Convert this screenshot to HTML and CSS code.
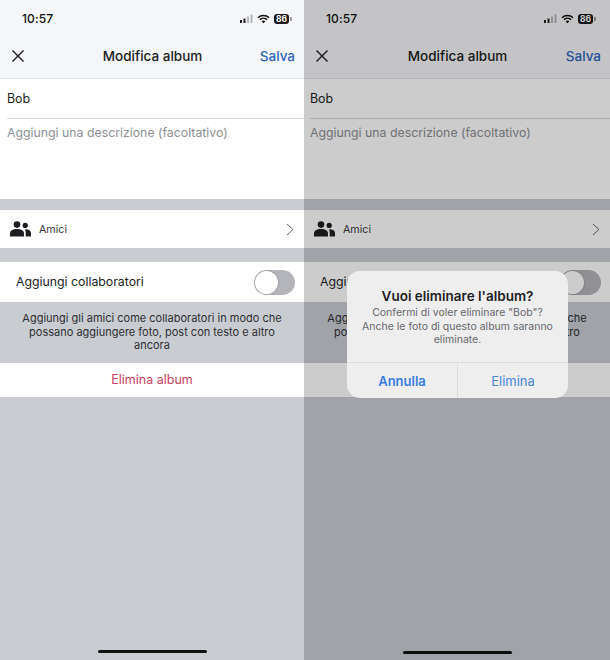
FILE: index.html
```html
<!DOCTYPE html>
<html lang="it">
<head>
<meta charset="utf-8">
<title>Modifica album</title>
<link rel="stylesheet" href="styles.css">
</head>
<body>
<main class="compare">
  <section class="phone phone-left">
    <header class="top">
      <div class="status">
        <span class="clock">10:57</span>
        <span class="status-icons">
          <svg class="signal" width="13" height="9" viewBox="0 0 13 9"><rect x="0" y="6" width="2" height="3" fill="#222"/><rect x="3.500" y="4.500" width="2" height="4.500" fill="#222"/><rect x="7" y="2.500" width="2" height="6.500" fill="#b5b6b9"/><rect x="10.500" y="0.500" width="2" height="8.500" fill="#b5b6b9"/></svg>
          <svg class="wifi" width="13" height="10" viewBox="0 0 14 10"><path d="M1 3.600a8.600 8.600 0 0 1 12 0M3.100 5.700a5.600 5.600 0 0 1 7.800 0" fill="none" stroke="#111" stroke-width="1.600"/><path d="M7 9.600 5 7.500a2.900 2.900 0 0 1 4 0z" fill="#111"/></svg>
          <span class="battery">86</span>
        </span>
      </div>
      <nav class="nav">
        <svg class="close" width="14" height="14" viewBox="0 0 14 14"><path d="M1.500 1.500l11 11M12.500 1.500l-11 11" stroke="#1c1c1e" stroke-width="1.400" fill="none"/></svg>
        <h1 class="title">Modifica album</h1>
        <span class="save">Salva</span>
      </nav>
    </header>
    <div class="fields">
      <div class="name">Bob</div>
      <div class="desc">Aggiungi una descrizione (facoltativo)</div>
    </div>
    <div class="row-audience">
      <svg class="people" width="21" height="16" viewBox="0 0 21 16"><circle cx="7" cy="3.600" r="3.300" fill="#1c1e21"/><circle cx="15.200" cy="4.400" r="2.600" fill="#1c1e21"/><path d="M0 15.500v-3c0-3 2.600-4.600 7-4.600s7 1.600 7 4.600v3z" fill="#1c1e21"/><path d="M15 8.200c3.600-.2 6 1.200 6 3.900v3.400h-5.300v-3.600c0-1.500-.2-2.700-.7-3.700z" fill="#1c1e21"/></svg>
      <span class="audience">Amici</span>
      <svg class="chev" width="8" height="13" viewBox="0 0 8 13"><path d="M1 1l6 5.500-6 5.500" fill="none" stroke="#66686c" stroke-width="1"/></svg>
    </div>
    <div class="row-toggle">
      <span class="collab">Aggiungi collaboratori</span>
      <span class="switch"><span class="knob"></span></span>
    </div>
    <p class="info">Aggiungi gli amici come collaboratori in modo che possano aggiungere foto, post con testo e altro ancora</p>
    <div class="delete">Elimina album</div>
    <div class="home-wrap"><span class="home"></span></div>
  </section>

  <section class="phone phone-right">
    <header class="top">
      <div class="status">
        <span class="clock">10:57</span>
        <span class="status-icons">
          <svg class="signal" width="13" height="9" viewBox="0 0 13 9"><rect x="0" y="6" width="2" height="3" fill="#222"/><rect x="3.500" y="4.500" width="2" height="4.500" fill="#222"/><rect x="7" y="2.500" width="2" height="6.500" fill="#b5b6b9"/><rect x="10.500" y="0.500" width="2" height="8.500" fill="#b5b6b9"/></svg>
          <svg class="wifi" width="13" height="10" viewBox="0 0 14 10"><path d="M1 3.600a8.600 8.600 0 0 1 12 0M3.100 5.700a5.600 5.600 0 0 1 7.800 0" fill="none" stroke="#111" stroke-width="1.600"/><path d="M7 9.600 5 7.500a2.900 2.900 0 0 1 4 0z" fill="#111"/></svg>
          <span class="battery">86</span>
        </span>
      </div>
      <nav class="nav">
        <svg class="close" width="14" height="14" viewBox="0 0 14 14"><path d="M1.500 1.500l11 11M12.500 1.500l-11 11" stroke="#1c1c1e" stroke-width="1.400" fill="none"/></svg>
        <h1 class="title">Modifica album</h1>
        <span class="save">Salva</span>
      </nav>
    </header>
    <div class="fields">
      <div class="name">Bob</div>
      <div class="desc">Aggiungi una descrizione (facoltativo)</div>
    </div>
    <div class="row-audience">
      <svg class="people" width="21" height="16" viewBox="0 0 21 16"><circle cx="7" cy="3.600" r="3.300" fill="#1c1e21"/><circle cx="15.200" cy="4.400" r="2.600" fill="#1c1e21"/><path d="M0 15.500v-3c0-3 2.600-4.600 7-4.600s7 1.600 7 4.600v3z" fill="#1c1e21"/><path d="M15 8.200c3.600-.2 6 1.200 6 3.900v3.400h-5.300v-3.600c0-1.500-.2-2.700-.7-3.700z" fill="#1c1e21"/></svg>
      <span class="audience">Amici</span>
      <svg class="chev" width="8" height="13" viewBox="0 0 8 13"><path d="M1 1l6 5.500-6 5.500" fill="none" stroke="#66686c" stroke-width="1"/></svg>
    </div>
    <div class="row-toggle">
      <span class="collab">Aggiungi collaboratori</span>
      <span class="switch"><span class="knob"></span></span>
    </div>
    <p class="info">Aggiungi gli amici come collaboratori in modo che possano aggiungere foto, post con testo e altro ancora</p>
    <div class="delete">Elimina album</div>
    <div class="home-wrap"><span class="home"></span></div>
    <div class="scrim"></div>
    <div class="alert">
      <div class="alert-body">
        <h2 class="alert-title">Vuoi eliminare l'album?</h2>
        <p class="alert-text">Confermi di voler eliminare "Bob"?<br>Anche le foto di questo album saranno eliminate.</p>
      </div>
      <div class="alert-actions">
        <span class="alert-btn alert-cancel">Annulla</span>
        <span class="alert-btn alert-ok">Elimina</span>
      </div>
    </div>
  </section>
</main>
</body>
</html>
```

FILE: styles.css
```css
* { box-sizing: border-box; }
html, body { margin: 0; padding: 0; }
body { width: 610px; height: 660px; overflow: hidden; font-family: Inter, "Liberation Sans", sans-serif; color: #1c1e21; }
.compare { display: flex; width: 610px; height: 660px; }
.phone { position: relative; display: flex; flex-direction: column; height: 660px; background: #c9ccd1; overflow: hidden; }
.phone-left { width: 304px; }
.phone-right { width: 306px; }

.top { height: 79px; background: #f5f6f8; border-bottom: 1px solid #e4e5e8; display: flex; flex-direction: column; }
.status { display: flex; align-items: center; justify-content: space-between; height: 37px; padding: 0 13px 0 22px; }
.phone-right .status { padding-right: 15px; }
.clock { font-size: 12px; font-weight: 500; letter-spacing: .1px; color: #111; }
.status-icons { display: flex; align-items: center; gap: 4px; }
.battery { position: relative; display: block; width: 15px; height: 10px; margin-right: 2px; border-radius: 3px; background: #1a1a1a; color: #fff; font-size: 8.500px; line-height: 10px; font-weight: 700; text-align: center; }
.battery::after { content: ""; position: absolute; left: 16px; top: 3px; width: 1.500px; height: 4px; border-radius: 0 1px 1px 0; background: #9a9a9c; }

.nav { position: relative; flex: 1; display: flex; align-items: center; justify-content: space-between; padding: 0 9px 3px 11px; }
.title { position: absolute; left: 0; right: 0; margin: 0; text-align: center; font-size: 13.500px; font-weight: 500; color: #1c1e21; padding-left: 1px; }
.save { position: relative; font-size: 13.500px; font-weight: 500; color: #2d67bd; }
.phone-right .save { color: #2d67bd; }
.close { position: relative; }

.fields { height: 120px; background: #fff; padding-left: 7px; }
.phone-right .fields { padding-left: 6px; }
.name { height: 40px; line-height: 39px; font-size: 12.400px; color: #1c1e21; border-bottom: 1px solid #d8d9dc; }
.desc { padding-top: 6px; font-size: 12.300px; line-height: 16px; color: #8d8f94; }

.row-audience { margin-top: 11px; height: 38px; background: #fff; display: flex; align-items: center; padding: 0 10px; }
.audience { margin-left: 8px; flex: 1; font-size: 10.700px; color: #3a3b3e; }
.row-toggle { margin-top: 14px; height: 40px; background: #fff; display: flex; align-items: center; justify-content: space-between; padding: 0 9px 0 16px; }
.collab { font-size: 12.300px; line-height: 15px; padding-bottom: 2px; color: #1c1e21; }
.switch { width: 41px; height: 25px; border-radius: 13px; background: #b4b5bb; padding: 1px; }
.knob { display: block; width: 23px; height: 23px; border-radius: 50%; background: #fff; box-shadow: 0 0 2px rgba(0,0,0,.3); }
.info { margin: 0; height: 61px; padding: 10px 12px 0; text-align: center; font-size: 11px; line-height: 13.500px; color: #2e2f33; }
.delete { height: 34px; background: #fff; text-align: center; line-height: 33px; font-size: 12.500px; color: #c9415f; }

.home-wrap { flex: 1; display: flex; align-items: flex-end; justify-content: center; padding: 0 0 7px 1px; }
.phone-right .home-wrap { padding-bottom: 6px; }
.home { display: block; width: 109px; height: 3px; border-radius: 2px; background: #111; }

.scrim { position: absolute; inset: 0; background: rgba(0,0,0,.2); }
.alert { position: absolute; left: 43px; top: 271px; width: 221px; height: 127px; border-radius: 13px; background: #eeeeef; display: flex; flex-direction: column; }
.alert-body { height: 92px; padding: 17px 8px 0; text-align: center; border-bottom: 1px solid #dedee0; }
.alert-title { margin: 0; font-size: 13.500px; line-height: 16px; font-weight: 600; color: #1d1d1f; }
.alert-text { margin: 2px 0 0; font-size: 10.500px; line-height: 13.500px; color: #67686b; }
.alert-actions { flex: 1; display: flex; }
.alert-btn { flex: 1; display: flex; align-items: center; justify-content: center; font-size: 13px; color: #4a86e0; }
.alert-cancel { font-weight: 600; color: #3b7de0; border-right: 1px solid #dedee0; }
```
